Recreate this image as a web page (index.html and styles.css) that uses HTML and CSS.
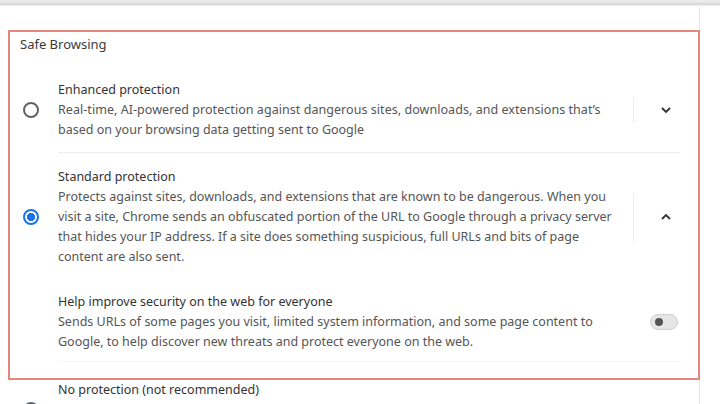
FILE: index.html
```html
<!DOCTYPE html>
<html>
<head>
<meta charset="utf-8">
<link rel="stylesheet" href="styles.css">
</head>
<body>
<div class="topbar"></div>
<div class="page">
  <section class="sb">
    <h2 class="sb-title">Safe Browsing</h2>
    <div class="option first">
      <div class="radio-col"><span class="radio"></span></div>
      <div class="text">
        <div class="label">Enhanced protection</div>
        <div class="desc"><span class="wide">Real-time, AI-powered protection against dangerous sites, downloads, and extensions that’s</span><br>based on your browsing data getting sent to Google</div>
      </div>
      <div class="sep"></div>
      <div class="action">
        <svg width="12" height="8" viewBox="0 0 12 8"><path d="M2 2 L6 6 L10 2" fill="none" stroke="#333" stroke-width="1.8"/></svg>
      </div>
    </div>
    <div class="divider"></div>
    <div class="option second">
      <div class="radio-col"><span class="radio checked"></span></div>
      <div class="text">
        <div class="label">Standard protection</div>
        <div class="desc">Protects against sites, downloads, and extensions that are known to be dangerous. When you<br>visit a site, Chrome sends an obfuscated portion of the URL to Google through a privacy server<br>that hides your IP address. If a site does something suspicious, full URLs and bits of page<br>content are also sent.</div>
      </div>
      <div class="sep tall"></div>
      <div class="action">
        <svg width="12" height="8" viewBox="0 0 12 8"><path d="M2 6 L6 2 L10 6" fill="none" stroke="#333" stroke-width="1.8"/></svg>
      </div>
    </div>
    <div class="option third">
      <div class="radio-col"></div>
      <div class="text">
        <div class="label">Help improve security on the web for everyone</div>
        <div class="desc">Sends URLs of some pages you visit, limited system information, and some page content to<br>Google, to help discover new threats and protect everyone on the web.</div>
      </div>
      <div class="sep blank"></div>
      <div class="action">
        <span class="toggle"><span class="knob"></span></span>
      </div>
    </div>
    <div class="divider faint"></div>
  </section>
  <div class="option outside">
    <div class="radio-col"></div>
    <div class="text"><div class="label">No protection (not recommended)</div></div>
  </div>
  <div class="option peek">
    <div class="radio-col"><span class="radio"></span></div>
  </div>
</div>
</body>
</html>
```

FILE: styles.css
```css
* { box-sizing: border-box; }
html, body { margin: 0; padding: 0; background: #fff; }
body {
  width: 720px;
  height: 404px;
  overflow: hidden;
  font-family: "Noto Sans", "Open Sans", sans-serif;
  color: #3a3a3a;
}
.topbar {
  height: 7px;
  background: linear-gradient(#ececec 0, #e6e6e6 3px, #cfcfcf 4px, #e4e4e4 5px, #f7f7f7 6px, #fff 7px);
}
.page {
  width: 700px;
  height: 397px;
  border-right: 1px solid #e6e6e6;
  padding-top: 23px;
}
.sb {
  margin-left: 8px;
  width: 692px;
  border: 2px solid #e5877d;
  padding-bottom: 16px;
}
.sb-title {
  margin: 4px 0 0 10px;
  font-size: 13px;
  font-weight: normal;
  line-height: 16px;
  color: #3a3a3a;
}
.option {
  display: flex;
  align-items: center;
}
.option.first { margin-top: 28px; }
.option.second { margin-top: 14px; }
.option.third { margin-top: 25px; }
.radio-col {
  width: 48px;
  flex: none;
  display: flex;
  justify-content: center;
  padding-right: 7px;
}
.radio {
  width: 16px;
  height: 16px;
  border-radius: 50%;
  border: 2px solid #5f6368;
  display: block;
}
.radio.checked {
  border-color: #1a73e8;
  background: radial-gradient(circle, #1a73e8 0 3.8px, #fff 4.4px);
}
.text {
  width: 575px;
  flex: none;
}
.label {
  font-size: 12.5px;
  line-height: 20px;
  color: #333;
}
.desc {
  font-size: 12.5px;
  line-height: 20px;
  color: #555;
  white-space: nowrap;
}
.wide { letter-spacing: 0.05px; }
.sep {
  width: 1px;
  height: 26px;
  background: #ededed;
  flex: none;
}
.sep.tall { height: 48px; }
.sep.blank { background: transparent; }
.action {
  width: 64px;
  flex: none;
  display: flex;
  justify-content: center;
  align-items: center;
}
.action svg { display: block; }
.toggle {
  width: 28px;
  height: 16px;
  border-radius: 8px;
  background: #e6e6e6;
  border: 1px solid #cfcfcf;
  display: flex;
  align-items: center;
  padding-left: 4px;
  margin-left: -4px;
}
.knob {
  width: 8px;
  height: 8px;
  border-radius: 50%;
  background: #555;
  display: block;
}
.divider {
  margin: 12px 18px 0 48px;
  height: 1px;
  background: #f0f0f0;
}
.divider.faint { margin-top: 9px; background: #f6f6f6; }
.option.outside { padding-left: 10px; }
.option.outside .label { color: #333; }
.option.peek { padding-left: 10px; margin-top: 2px; }
```
